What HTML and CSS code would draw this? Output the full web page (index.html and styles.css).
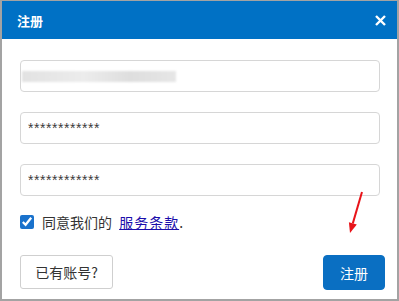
FILE: index.html
```html
<!DOCTYPE html>
<html lang="zh">
<head>
    <meta charset="UTF-8">
    <meta name="viewport" content="width=device-width, initial-scale=1.0">
    <title>注册</title>
    <link rel="stylesheet" href="styles.css">
</head>
<body>
    <div class="dialog">
        <div class="header">
            <span class="title">注册</span>
            <svg class="close" width="11" height="11" viewBox="0 0 11 11">
                <path d="M1 1 L10 10 M10 1 L1 10" stroke="#fff" stroke-width="2.4" fill="none"/>
            </svg>
        </div>
        <div class="content">
            <div class="field"><span class="blur"></span></div>
            <input class="field" type="text" value="************">
            <input class="field" type="text" value="************">
            <label class="agree">
                <input type="checkbox" checked>
                <span>同意我们的 <a href="#">服务条款</a>.</span>
            </label>
            <div class="actions">
                <button class="btn">已有账号?</button>
                <button class="btn primary">注册</button>
            </div>
        </div>
    </div>

    <svg class="arrow" width="399" height="301" viewBox="0 0 399 301">
        <line x1="362" y1="192" x2="352.8" y2="223.4" stroke="#e8141a" stroke-width="2"/>
        <polygon points="350,233 356.8,224.5 348.9,222.2" fill="#e8141a"/>
    </svg>
</body>
</html>
```

FILE: styles.css
```css
body {
    margin: 0;
    font-family: "Noto Sans CJK SC", "Liberation Sans", sans-serif;
}
.dialog {
    width: 399px;
    height: 301px;
    box-sizing: border-box;
    border: 2px solid #a3a3a3;
    border-top-width: 1px;
    background: #fff;
    display: flex;
    flex-direction: column;
}
.header {
    height: 38px;
    background: #0071c5;
    color: #fff;
    display: flex;
    align-items: center;
    justify-content: space-between;
    padding: 0 11px 0 15px;
}
.title {
    font-size: 13px;
    font-weight: bold;
}
.content {
    flex: 1;
    padding: 21px 17px 0 18px;
    display: flex;
    flex-direction: column;
}
.field {
    height: 32px;
    box-sizing: border-box;
    border: 1px solid #d6d6d6;
    border-radius: 4px;
    margin-bottom: 20px;
    padding: 0 7px;
    font-family: "Liberation Sans", sans-serif;
    font-size: 14px;
    letter-spacing: 0.55px;
    color: #3a3a3a;
    display: flex;
    align-items: center;
    outline: none;
}
.field:first-child {
    padding: 0 1px;
}
.blur {
    width: 154px;
    height: 11px;
    background: linear-gradient(90deg, #e2e2e2, #ececec 40%, #dedede 70%, #e6e6e6);
    filter: blur(1.2px);
}
.agree {
    display: flex;
    align-items: center;
    gap: 8px;
    height: 20px;
    margin-top: -4px;
    font-size: 14px;
    color: #333;
}
.agree input {
    width: 14px;
    height: 14px;
    margin: 0;
    accent-color: #1a72cc;
}
.agree a {
    color: #1a0dab;
    margin-left: 4px;
    letter-spacing: 1px;
}
.actions {
    display: flex;
    justify-content: space-between;
    margin-top: 23px;
}
.btn {
    height: 34px;
    width: 93px;
    border: 1px solid #cfcfcf;
    border-radius: 3px;
    background: #fff;
    color: #333;
    font-family: inherit;
    font-size: 14px;
}
.btn.primary {
    width: 62px;
    border-color: #0a6fc2;
    background: #0a6fc2;
    color: #fff;
    border-radius: 4px;
    margin-right: -5px;
    height: 35px;
}
.arrow {
    position: absolute;
    top: 0;
    left: 0;
    pointer-events: none;
}
```
